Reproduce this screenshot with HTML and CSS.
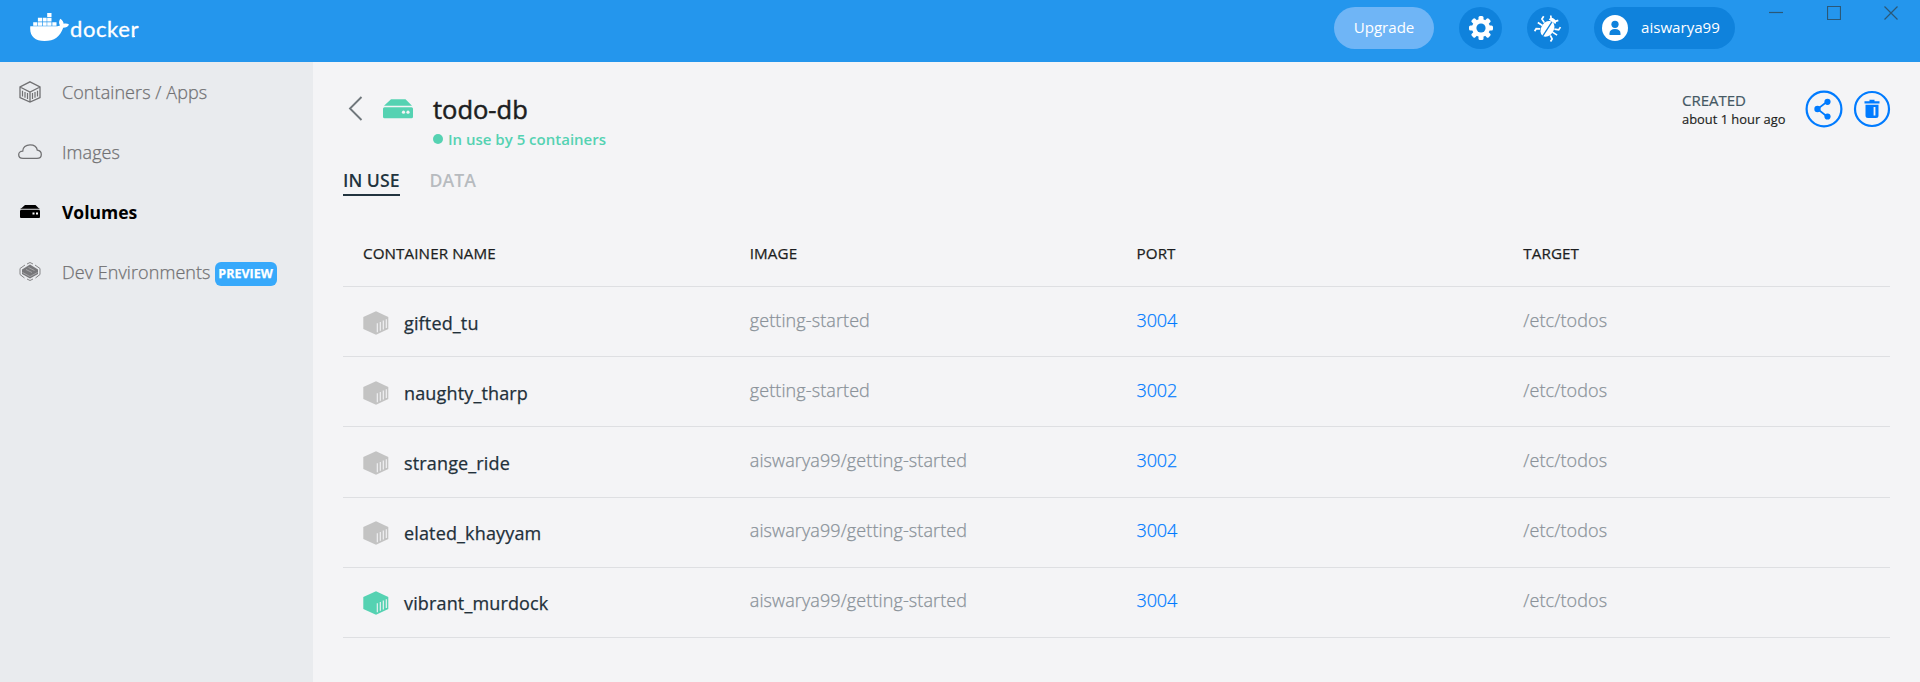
FILE: index.html
```html
<!DOCTYPE html>
<html lang="en">
<head>
<meta charset="utf-8">
<title>Docker Desktop</title>
<link rel="stylesheet" href="styles.css">
</head>
<body>
<svg class="defs" width="0" height="0" aria-hidden="true">
  <symbol id="container" viewBox="0 0 26 24">
    <path fill="currentColor" d="M13 .3 25.3 6v12L13 23.7.3 18V6z"/>
    <path stroke="#f4f4f6" stroke-width="1.1" fill="none" d="M14.3 12.2v9M17.3 11v8.8M20.3 9.6v8.8M23.3 8.3V17"/>
  </symbol>
  <symbol id="volume" viewBox="0 0 30 20">
    <path fill="currentColor" d="M8 .3h14.500L29 6.800H1zM1.500 8.300h27Q30 8.300 30 9.800v8q0 1.500-1.500 1.500h-27Q0 19.300 0 17.800v-8q0-1.500 1.500-1.500z"/>
    <circle cx="20.500" cy="13.200" r="1.600" fill="#f4f4f6"/><circle cx="25" cy="13.200" r="1.600" fill="#f4f4f6"/>
  </symbol>
</svg>
<header class="titlebar">
  <div class="brand">
    <svg class="whale" width="40" height="30" viewBox="0 0 40 30" fill="#fff">
      <path d="M17.200 1h4.300v3.900h-4.300zM7.900 5.800h4.100v3.700H7.900zM12.700 5.800h4v3.700h-4zM17.200 5.800h4.300v3.700h-4.300zM3.200 10.200h4.100v3.500H3.200zM7.900 10.200h4.100v3.500H7.900zM12.700 10.200h4v3.500h-4zM17.200 10.200h4.300v3.500h-4.300zM22.300 10.200h4.200v3.500h-4.200z"/>
      <path d="M.3 14.300h25.500c2 0 3.700-.6 4.200-1.100-1.700-2.300-.8-4.800.4-6.400 2.200 1.400 3.200 3.400 3.200 5 2.100-.5 4.200-.2 5.400.6-1 2.300-3 3.300-5.800 3.300C30.200 24.500 24.500 29 14.500 29 4.500 29-.7 24 .3 14.300z"/>
    </svg>
    <span class="wordmark">docker</span><span class="mark-dot"></span>
  </div>
  <div class="actions">
    <div class="upgrade">Upgrade</div>
    <div class="round">
      <svg width="26" height="26" viewBox="0 0 26 26"><g fill="#fff"><rect x="10.500" y="1" width="5" height="24" rx="1.500"/><rect x="10.500" y="1" width="5" height="24" rx="1.500" transform="rotate(45 13 13)"/><rect x="10.500" y="1" width="5" height="24" rx="1.500" transform="rotate(90 13 13)"/><rect x="10.500" y="1" width="5" height="24" rx="1.500" transform="rotate(135 13 13)"/><circle cx="13" cy="13" r="9"/></g><circle cx="13" cy="13" r="4.600" fill="#0f82dc"/></svg>
    </div>
    <div class="round bug">
      <svg width="28" height="28" viewBox="0 0 28 28"><g transform="rotate(33 14 14)"><ellipse cx="14" cy="15" rx="6.300" ry="8.500" fill="#fff"/><path fill="#fff" d="M10 6.500a4 3.500 0 0 1 8 0z"/><path d="M14 7v17" stroke="#0f82dc" stroke-width="1.300"/><path d="M8 11.500 4 9.800V6.500M8 15H2.500M8 19l-3.500 2v3M20 11.500l4-1.700V6.500M20 15h5.500M20 19l3.500 2v3M11.500 4.500 9.500 2M16.500 4.500l2-2.500" stroke="#fff" stroke-width="1.700" fill="none"/></g></svg>
    </div>
    <div class="user">
      <svg width="26" height="26" viewBox="0 0 26 26"><circle cx="13" cy="13" r="13" fill="#fff"/><circle cx="13" cy="9.300" r="3.600" fill="#0f82dc"/><path d="M7.500 20v-1.500c0-3 2-4.500 5.500-4.500s5.500 1.500 5.500 4.500V20z" fill="#0f82dc"/></svg>
      <span>aiswarya99</span>
    </div>
  </div>
  <div class="window-controls">
    <svg width="14" height="14" viewBox="0 0 14 14"><path d="M0 6.500h14"/></svg>
    <svg width="14" height="14" viewBox="0 0 14 14"><path d="M.5.5h13v13H.5z"/></svg>
    <svg width="14" height="14" viewBox="0 0 14 14"><path d="m.5.500 13 13m0-13-13 13"/></svg>
  </div>
</header>
<div class="shell">
  <nav class="sidebar">
    <div class="nav-item">
      <svg width="24" height="24" viewBox="0 0 24 24" fill="none" stroke="#717173" stroke-width="1.300"><path d="M12 1.800 22 7v10.500L12 22 2 17.500V7zM2 7l10 5 10-5M12 12v10"/><path stroke-width="1.200" d="M4.500 10.800v5.800M7 12v5.800M9.500 13v6M14.500 13v6M17 12v5.800M19.500 10.800v5.800"/></svg>
      <span>Containers / Apps</span>
    </div>
    <div class="nav-item">
      <svg width="24" height="24" viewBox="0 0 24 24" fill="none" stroke="#717173" stroke-width="1.300"><path d="M5 18.300C2.500 18.300.7 16.800.7 14.700c0-2 1.700-3.500 4-3.500C4.700 7.500 8 4.800 12 4.800c3.800 0 6.800 2 7.300 5.400 2.400.4 4 2 4 4.200 0 2.300-1.800 3.900-4.300 3.900z"/></svg>
      <span>Images</span>
    </div>
    <div class="nav-item active">
      <svg width="24" height="24" viewBox="0 0 24 24"><path d="M7 5h10.500l4 4h-19z"/><path d="M2.500 9h19" stroke="#666" stroke-width="1"/><path d="M3 10h18q1 0 1 1v6q0 1-1 1H3q-1 0-1-1v-6q0-1 1-1z"/><path d="M14.500 12.500h2v2h-2zM18 12.500h2v2h-2z" fill="#fff"/></svg>
      <span>Volumes</span>
    </div>
    <div class="nav-item">
      <svg width="24" height="24" viewBox="0 0 24 24" fill="none" stroke="#858587"><path d="m4 9.500 8-5 8 5v4.500L12 18.500 4 14z" fill="#77777a" stroke="none"/><path d="m4.500 12.500 7.500 4 7.500-4M8 9.500l6 3M10.500 7.500l6 3" stroke="#b0b0b3" stroke-width=".8"/><path d="m9 4 3-1.500L15 4M7 5 2 8.500v6L6.500 18M17 5l5 3.500v6L17.500 18M9 19l3 1.500 3-1.500"/></svg>
      <span>Dev Environments</span><b class="preview">PREVIEW</b>
    </div>
  </nav>
  <main class="content">
    <div class="head">
      <svg class="back" width="15" height="25" viewBox="0 0 15 25"><path d="M13.500 1 2 12.500l11.500 11.500" fill="none" stroke="#70777c" stroke-width="1.900"/></svg>
      <svg class="volume" width="30" height="20"><use href="#volume"/></svg>
      <div class="heading">
        <h1>todo-db</h1>
        <div class="status"><i></i><span>In use by 5 containers</span></div>
      </div>
      <div class="created"><div class="label">CREATED</div><div class="ago">about 1 hour ago</div></div>
      <svg class="share" width="38" height="38" viewBox="0 0 38 38"><circle cx="19" cy="19" r="17.400" fill="none" stroke="#007bff" stroke-width="2.200"/><path d="M22 11.800 12.500 19l9.500 7.500" fill="none" stroke="#007bff" stroke-width="1.700"/><g fill="#007bff"><circle cx="22.500" cy="11.800" r="3.100"/><circle cx="12.500" cy="19" r="3.200"/><circle cx="22.500" cy="26.500" r="3.100"/></g></svg>
      <svg class="trash" width="38" height="38" viewBox="0 0 38 38"><circle cx="19" cy="19" r="17" fill="none" stroke="#007bff" stroke-width="2.200"/><path fill="#007bff" d="M16.500 9.800h5v1.400h5v2.200H11.500v-2.200h5zM12.500 14.800h13v10.700q0 2.500-2.500 2.500h-8q-2.500 0-2.500-2.500z"/><path d="M21.500 17v8.500" stroke="#f4f4f6" stroke-width="1.800"/></svg>
    </div>
    <div class="tabs"><span class="tab current">IN USE</span><span class="tab">DATA</span></div>
    <div class="table">
      <div class="row header"><span>CONTAINER NAME</span><span>IMAGE</span><span>PORT</span><span>TARGET</span></div>
      <div class="row"><div class="name"><svg width="26" height="24"><use href="#container"/></svg><span>gifted_tu</span></div><span>getting-started</span><span class="port">3004</span><span>/etc/todos</span></div>
      <div class="row"><div class="name"><svg width="26" height="24"><use href="#container"/></svg><span>naughty_tharp</span></div><span>getting-started</span><span class="port">3002</span><span>/etc/todos</span></div>
      <div class="row"><div class="name"><svg width="26" height="24"><use href="#container"/></svg><span>strange_ride</span></div><span>aiswarya99/getting-started</span><span class="port">3002</span><span>/etc/todos</span></div>
      <div class="row"><div class="name"><svg width="26" height="24"><use href="#container"/></svg><span>elated_khayyam</span></div><span>aiswarya99/getting-started</span><span class="port">3004</span><span>/etc/todos</span></div>
      <div class="row running"><div class="name"><svg width="26" height="24"><use href="#container"/></svg><span>vibrant_murdock</span></div><span>aiswarya99/getting-started</span><span class="port">3004</span><span>/etc/todos</span></div>
    </div>
  </main>
</div>
</body>
</html>
```
FILE: styles.css
```css
* { box-sizing: border-box; }
body {
  margin: 0;
  height: 682px;
  display: flex;
  flex-direction: column;
  overflow: hidden;
  background: #f4f4f6;
  font-family: "Open Sans", "Noto Sans", sans-serif;
  white-space: nowrap;
}
svg { display: block; flex: none; }
.defs { position: absolute; }

.titlebar {
  height: 62px;
  flex: none;
  display: flex;
  align-items: flex-start;
  background: #2496ed;
  color: #fff;
}
.brand { display: flex; flex: 1; padding: 12px 0 0 30px; }
.wordmark {
  width: 67px;
  font: 400 22px/28px Lato, sans-serif;
  letter-spacing: .6px;
  -webkit-text-stroke: .3px #fff;
  margin: 3px 0 0 0;
}
.mark-dot { width: 1px; height: 1px; margin: 24px 0 0 -3px; background: #fff; }
.actions { display: flex; gap: 25px; padding-top: 7px; font-size: 15.100px; line-height: 41px; }
.upgrade { width: 100px; height: 42px; border-radius: 21px; background: #6fb5f6; text-align: center; }
.round {
  width: 43px;
  height: 42px;
  border-radius: 50%;
  background: #0f82dc;
  display: flex;
  align-items: center;
  justify-content: center;
}
.bug { width: 42px; }
.user {
  width: 141px;
  height: 42px;
  border-radius: 21px;
  background: #0f82dc;
  display: flex;
  align-items: center;
  gap: 13px;
  padding-left: 8px;
}
.user span { margin-top: -1px; }
.window-controls {
  display: flex;
  gap: 43.500px;
  padding: 6px 22px 0 34px;
  fill: none;
  stroke: #2b5877;
  stroke-width: 1.200;
}

.shell { flex: 1; display: flex; min-height: 0; }
.sidebar { width: 313px; flex: none; background: #e9ebee; }
.nav-item {
  height: 60px;
  display: flex;
  align-items: center;
  padding-left: 18px;
  color: #717173;
  font-size: 18px;
  font-weight: 300;
  letter-spacing: .07px;
  -webkit-text-stroke: .25px;
}
.nav-item span { margin-left: 20px; }
.nav-item.active {
  color: #000;
  font-weight: 700;
  font-size: 17.500px;
  letter-spacing: 0;
  -webkit-text-stroke: 0;
}
.preview {
  margin: 3px 0 0 4px;
  width: 62px;
  height: 24px;
  border-radius: 6px;
  background: #37a9fb;
  color: #fff;
  font-size: 12.500px;
  font-weight: 700;
  letter-spacing: 0;
  line-height: 24px;
  text-align: center;
}

.content { flex: 1; padding: 28px 30px 0; }
.head { display: flex; height: 72px; padding-left: 5px; }
.back { margin-top: 6px; }
.volume { margin: 9px 0 0 20px; color: #55d2b2; }
.heading { flex: 1; padding-left: 20px; }
h1 {
  margin: 0;
  font-size: 25.500px;
  font-weight: 400;
  line-height: 39px;
  color: #1c1e21;
  -webkit-text-stroke: .5px;
}
.status { display: flex; align-items: center; gap: 5px; color: #55d2b2; font-size: 15px; font-weight: 600; line-height: 20px; }
.status i { width: 10px; height: 10px; border-radius: 50%; background: #55d2b2; }
.created { width: 123px; margin-top: -1px; }
.label { color: #445864; font-size: 15px; line-height: 22px; -webkit-text-stroke: .2px; }
.ago { color: #1c1e21; font-size: 12.900px; line-height: 16px; -webkit-text-stroke: .15px; }
.share { margin-right: 10px; }
.trash { margin-right: -1px; }
.tabs { display: flex; gap: 30px; font-size: 17.700px; font-weight: 600; line-height: 36px; color: #b7bbbf; }
.tab { height: 34px; }
.tab.current { color: #22343f; border-bottom: 2px solid #22343f; }

.table { margin-top: 24px; }
.row {
  display: grid;
  grid-template-columns: repeat(4, 1fr);
  align-items: center;
  height: 70.200px;
  border-bottom: 1px solid #dedfe2;
  color: #8a9299;
  font-size: 18px;
  font-weight: 300;
  letter-spacing: .1px;
  -webkit-text-stroke: .25px;
}
.row > * { padding: 0 0 4px 20px; }
.row.header { height: 67px; color: #1c1e21; font-size: 15.200px; font-weight: 400; }
.row.header > * { padding-bottom: 0; }
.row > .name {
  display: flex;
  align-items: center;
  gap: 15px;
  padding: 2px 0 0 20px;
  color: #22303a;
  font-weight: 400;
  letter-spacing: .15px;
}
.name svg { color: #c3c3c3; }
.running .name svg { color: #55d2b2; }
.row > .port { color: #007bff; letter-spacing: -.1px; }
```
